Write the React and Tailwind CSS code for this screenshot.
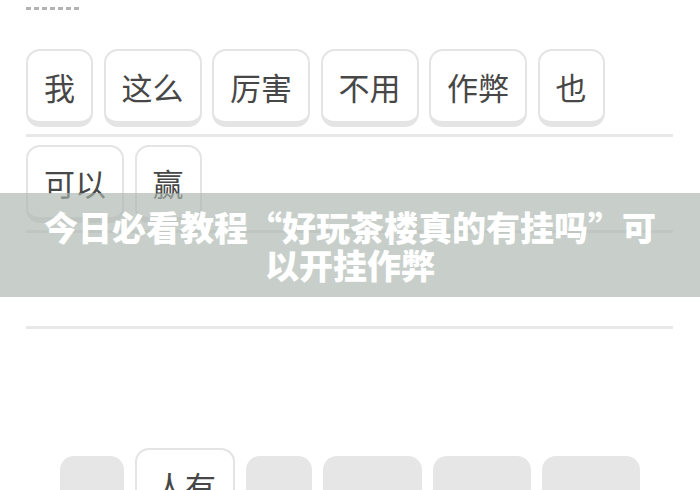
const ROWS = [
  ['我', '这么', '厉害', '不用', '作弊', '也'],
  ['可以', '赢'],
  [],
]

// bottom tray: empty slots, plus the one tile still waiting to be placed
const TRAY = [
  { w: 'w-[64px]' },
  { w: 'w-[100px]', text: '人有' },
  { w: 'w-[66px]' },
  { w: 'w-[99px]' },
  { w: 'w-[98px]' },
  { w: 'w-[98px]' },
]

const cjk = { fontFamily: '"Noto Sans CJK SC", "Noto Sans", sans-serif' }

function Tile({ text }) {
  return (
    <div className="flex h-[78px] items-center justify-center rounded-[14px] border-2 border-b-[6px] border-[#e4e4e4] bg-white px-4 text-[31px] leading-none text-[#474747]">
      {text}
    </div>
  )
}

export default function App() {
  return (
    <div className="relative h-[490px] w-[700px] overflow-hidden bg-white" style={cjk}>
      <div className="px-[26px] pt-[7px]">
        {/* cut-off heading underline */}
        <div className="h-[3px] w-[54px] bg-[repeating-linear-gradient(90deg,#b3b3b3_0_5px,transparent_5px_8px)]" />

        <div className="mt-[39px] w-[647px]">
          {ROWS.map((row, i) => (
            <div key={i} className="pb-[8px]">
              <div className="flex h-[78px] gap-[10.5px]">
                {row.map((t) => (
                  <Tile key={t} text={t} />
                ))}
              </div>
              <div className="mt-[7px] h-[3px] w-full bg-[#e8e8e8]" />
            </div>
          ))}
        </div>
      </div>

      {/* tray */}
      <div className="mt-[111px] flex items-start justify-center gap-[11px]">
        {TRAY.map((s, i) =>
          s.text ? (
            <div key={i} className={s.w}>
              <Tile text={s.text} />
            </div>
          ) : (
            <div key={i} className={`${s.w} mt-[8px] h-[78px] rounded-[14px] bg-[#e6e6e6]`} />
          )
        )}
      </div>

      {/* title banner overlay */}
      <div className="absolute left-0 top-[193px] h-[104px] w-full bg-[rgba(170,181,173,0.65)] px-[40px] pt-[15px] text-center text-[34px] font-black leading-[38px] text-white">
        今日必看教程“好玩茶楼真的有挂吗”可以开挂作弊
      </div>
    </div>
  )
}
